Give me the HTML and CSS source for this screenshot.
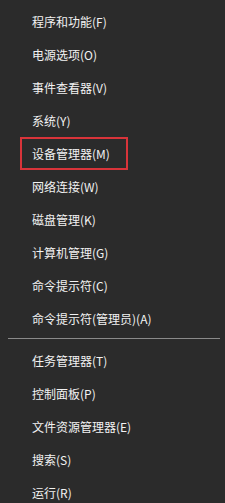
FILE: index.html
```html
<!DOCTYPE html>
<html lang="zh-CN">
<head>
<meta charset="utf-8">
<link rel="stylesheet" href="styles.css">
</head>
<body>
<div class="menu">
  <div class="item">程序和功能(F)</div>
  <div class="item">电源选项(O)</div>
  <div class="item">事件查看器(V)</div>
  <div class="item">系统(Y)</div>
  <div class="item"><span class="hl">设备管理器(M)</span></div>
  <div class="item">网络连接(W)</div>
  <div class="item">磁盘管理(K)</div>
  <div class="item">计算机管理(G)</div>
  <div class="item">命令提示符(C)</div>
  <div class="item">命令提示符(管理员)(A)</div>
  <div class="sep"></div>
  <div class="item">任务管理器(T)</div>
  <div class="item">控制面板(P)</div>
  <div class="item">文件资源管理器(E)</div>
  <div class="item">搜索(S)</div>
  <div class="item">运行(R)</div>
</div>
</body>
</html>
```
FILE: styles.css
```css
html, body {
  margin: 0;
  padding: 0;
  background: #2b2b2b;
}
.menu {
  width: 225px;
  height: 503px;
  padding-top: 5px;
  box-sizing: border-box;
  font-family: "Noto Sans CJK SC", "Noto Sans", sans-serif;
  font-size: 12px;
  color: #f2f2f2;
  overflow: hidden;
}
.item {
  height: 33px;
  display: flex;
  align-items: center;
  padding-left: 32px;
  white-space: nowrap;
}
.hl {
  display: flex;
  align-items: center;
  height: 33px;
  box-sizing: border-box;
  margin-left: -12px;
  padding-left: 10px;
  width: 108px;
  border: 2px solid #d9343a;
}
.sep {
  height: 1px;
  background: #8a8a8a;
  margin: 3px 5px 5px 8px;
}
```
